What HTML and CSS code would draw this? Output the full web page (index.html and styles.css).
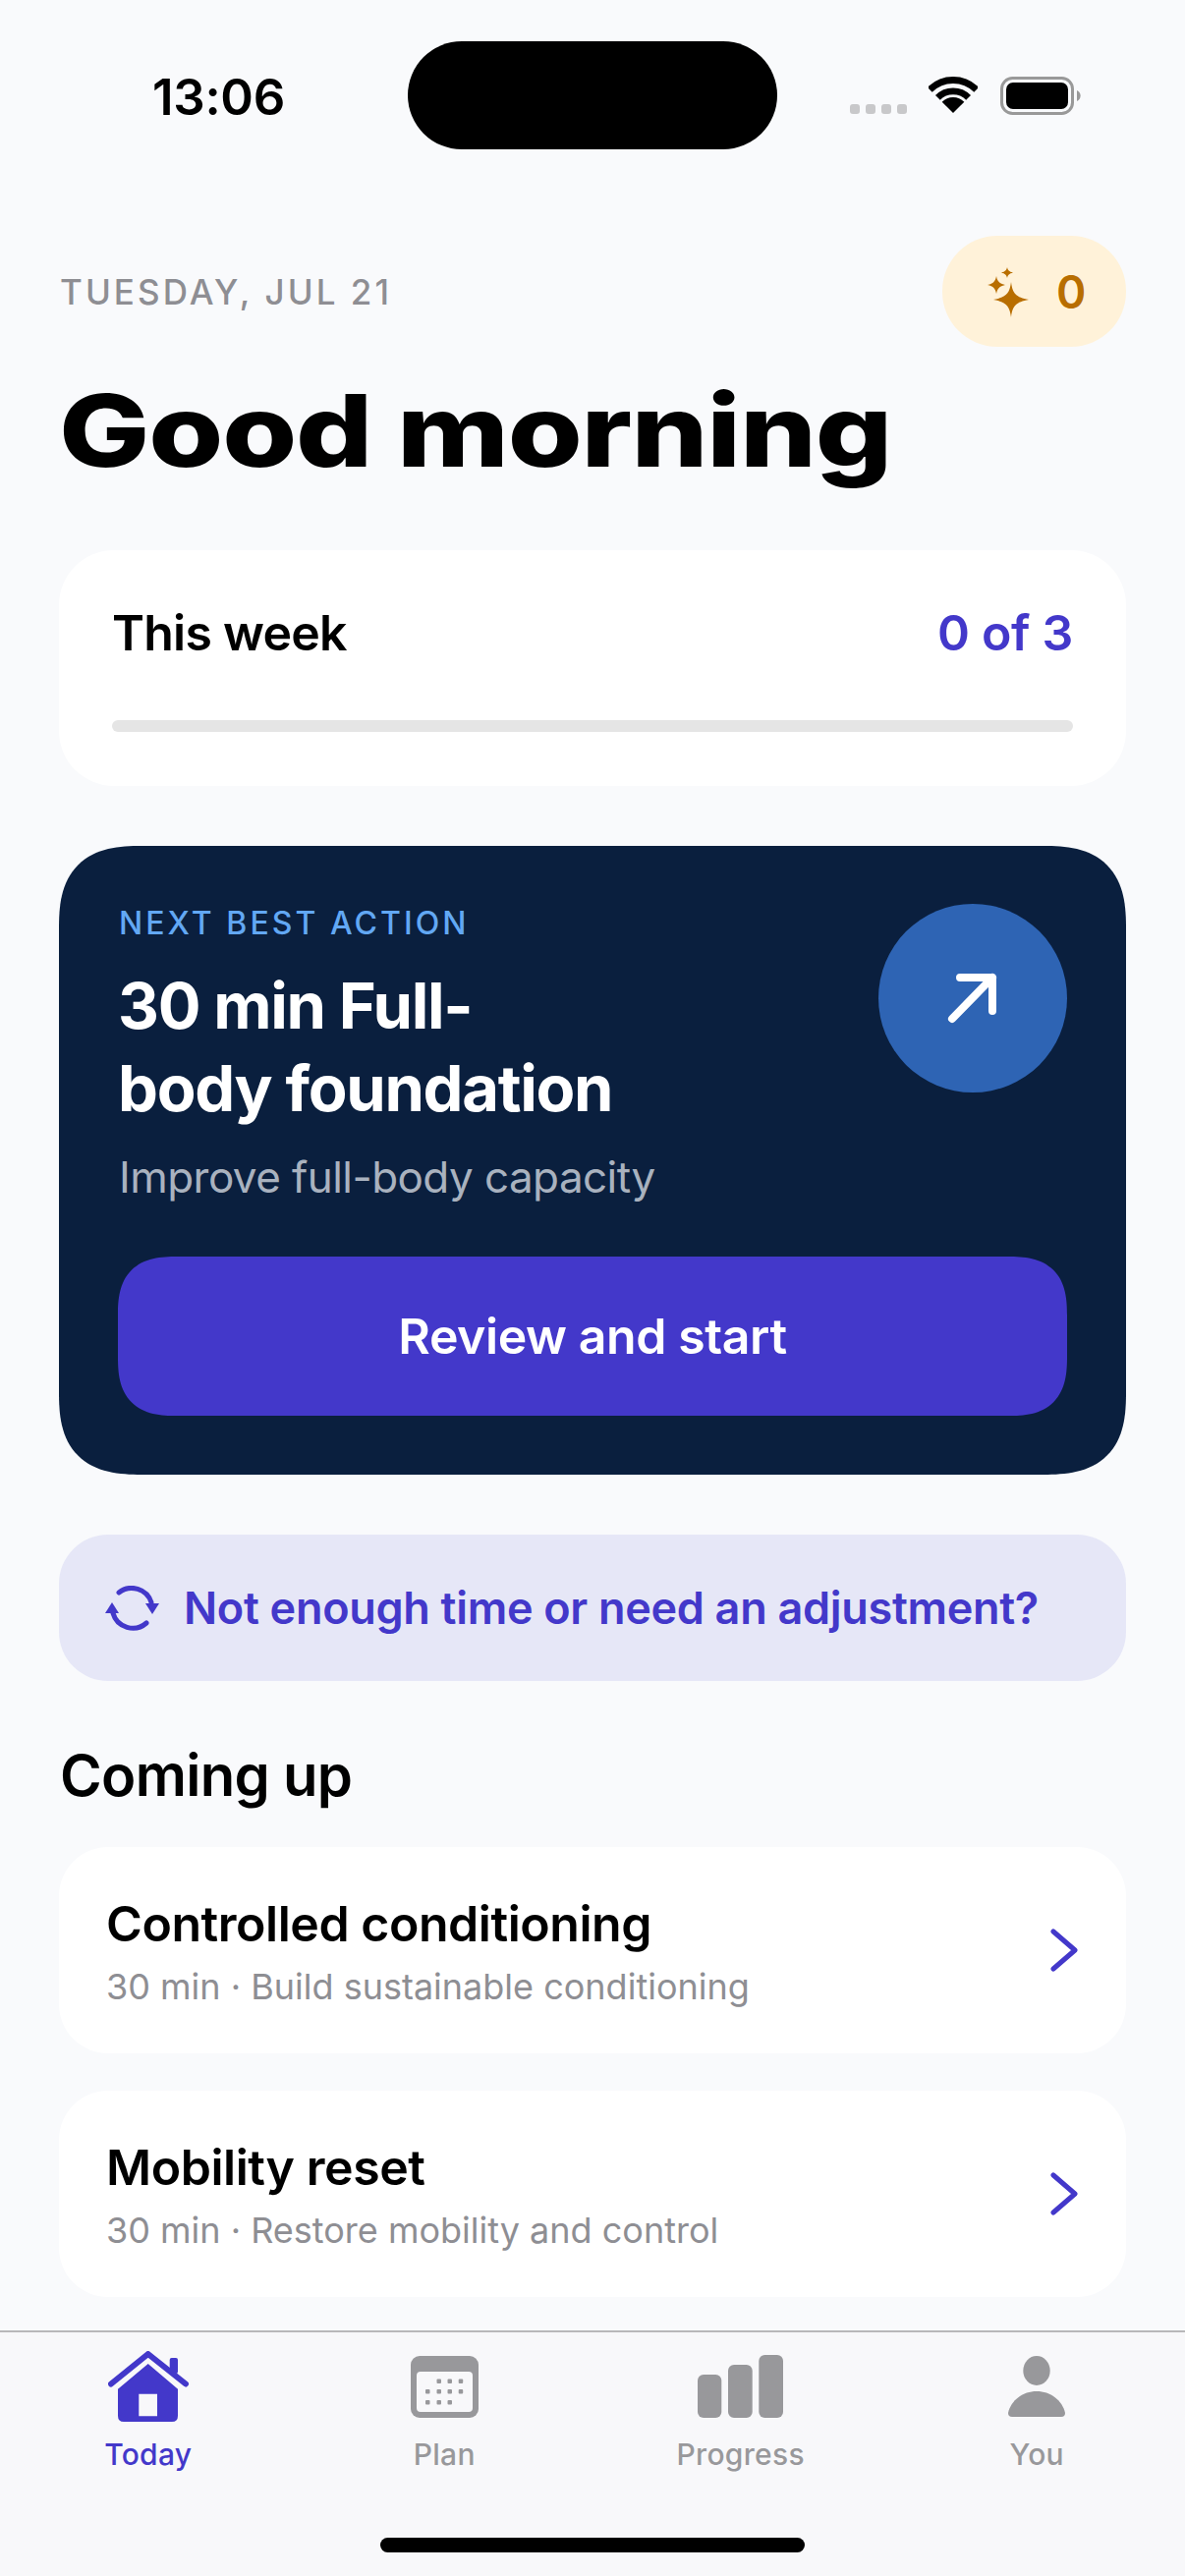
FILE: index.html
```html
<!DOCTYPE html>
<html lang="en">
<head>
<meta charset="utf-8">
<title>Today</title>
<link rel="stylesheet" href="styles.css">
</head>
<body>
<div class="screen">
  <header class="status">
    <span class="time">13:06</span>
    <span class="island"></span>
    <span class="status-icons">
      <span class="signal"><i></i><i></i><i></i><i></i></span>
      <svg class="wifi" viewBox="0 0 50 37"><path class="wifi-arc" d="M1.3 13.3A33.5 33.5 0 0 1 48.7 13.3"/><path class="wifi-arc" d="M9.4 21.4A22 22 0 0 1 40.6 21.4"/><path d="M25 37L13.7 25.7A16 16 0 0 1 36.3 25.7Z"/></svg>
      <svg class="battery" viewBox="0 0 82 39"><rect class="batt-frame" x="1.5" y="1.5" width="72" height="36" rx="11"/><rect x="6" y="6" width="63" height="27" rx="7"/><path class="batt-tip" d="M78 14a6 6 0 0 1 0 11z"/></svg>
    </span>
  </header>

  <main class="content">
    <div class="topline">
      <span class="date">TUESDAY, JUL 21</span>
      <span class="points">
        <svg class="sparkles" viewBox="0 0 44 52"><path d="M24 16C25.500 28 29 31.500 42 34C29 36.500 25.500 40 24 52C22.500 40 19 36.500 6 34C19 31.500 22.500 28 24 16Z"/><path d="M9 10C10 15.500 12 17.500 18 19C12 20.500 10 22.500 9 28C8 22.500 6 20.500 0 19C6 17.500 8 15.500 9 10Z"/><path d="M20 1C20.600 4 22 5.500 26 6.500C22 7.500 20.600 9 20 12C19.400 9 18 7.500 14 6.500C18 5.500 19.400 4 20 1Z"/></svg>
        <b class="points-num">0</b>
      </span>
    </div>
    <h1 class="greeting">Good morning</h1>

    <section class="week">
      <div class="week-row"><span class="week-title">This week</span><span class="week-count">0 of 3</span></div>
      <div class="track"></div>
    </section>

    <section class="hero">
      <div class="hero-top">
        <div class="hero-text">
          <div class="eyebrow">NEXT BEST ACTION</div>
          <h2 class="hero-title">30 min Full-<br>body foundation</h2>
          <p class="hero-sub">Improve full-body capacity</p>
        </div>
        <span class="hero-circle">
          <svg class="arrow" viewBox="0 0 56 56"><path d="M7 49L48 7M15 7H48V41"/></svg>
        </span>
      </div>
      <button class="cta">Review and start</button>
    </section>

    <button class="adjust">
      <svg class="refresh" viewBox="0 0 56 46"><path class="refresh-arc" d="M14 7A21 21 0 0 1 47 17"/><path d="M41 18H55L48 29Z"/><path class="refresh-arc" d="M42 38A21 21 0 0 1 8 28"/><path d="M0 28H14L7 17Z"/></svg>
      <span>Not enough time or need an adjustment?</span>
    </button>

    <h3 class="section-title">Coming up</h3>
    <div class="list">
      <article class="item">
        <div class="item-text">
          <div class="item-title">Controlled conditioning</div>
          <div class="item-sub">30 min · Build sustainable conditioning</div>
        </div>
        <svg class="chevron" viewBox="0 0 30 44"><path d="M4 3L26 22L4 41"/></svg>
      </article>
      <article class="item">
        <div class="item-text">
          <div class="item-title">Mobility reset</div>
          <div class="item-sub">30 min · Restore mobility and control</div>
        </div>
        <svg class="chevron" viewBox="0 0 30 44"><path d="M4 3L26 22L4 41"/></svg>
      </article>
    </div>
  </main>

  <nav class="tabbar">
    <div class="tabs">
      <div class="tab tab-active">
        <span class="tab-icon"><svg class="ic-home" viewBox="0 0 82 72"><path class="roof" d="M3 33.500L40.700 3L79 33.500"/><rect x="62.700" y="7" width="8.300" height="16" rx="2"/><path fill-rule="evenodd" d="M40.700 13L71 38.700V66Q71 72 65 72H16Q10 72 10 66V38.700ZM31.300 43.700V66.300H50V43.700Z"/></svg></span>
        <span class="tab-label">Today</span>
      </div>
      <div class="tab">
        <span class="tab-icon"><svg class="ic-plan" viewBox="0 0 69 63"><rect width="69" height="63" rx="9"/><rect class="cal-page" x="6" y="16" width="57" height="41" rx="4"/><g class="cal-dots"><rect x="26.500" y="23.500" width="4.500" height="4.500" rx="1"/><rect x="37.500" y="23.500" width="4.500" height="4.500" rx="1"/><rect x="48.700" y="23.500" width="4.500" height="4.500" rx="1"/><rect x="15" y="34" width="4.500" height="4.500" rx="1"/><rect x="26.500" y="34" width="4.500" height="4.500" rx="1"/><rect x="37.500" y="34" width="4.500" height="4.500" rx="1"/><rect x="48.700" y="34" width="4.500" height="4.500" rx="1"/><rect x="15" y="45" width="4.500" height="4.500" rx="1"/><rect x="26.500" y="45" width="4.500" height="4.500" rx="1"/><rect x="37.500" y="45" width="4.500" height="4.500" rx="1"/></g></svg></span>
        <span class="tab-label">Plan</span>
      </div>
      <div class="tab">
        <span class="tab-icon"><svg class="ic-progress" viewBox="0 0 87 64"><rect y="20" width="24.300" height="44" rx="6"/><rect x="31" y="10" width="24.700" height="54" rx="6"/><rect x="62.300" width="24.700" height="64" rx="6"/></svg></span>
        <span class="tab-label">Progress</span>
      </div>
      <div class="tab">
        <span class="tab-icon"><svg class="ic-you" viewBox="0 0 58 62"><ellipse cx="29" cy="15" rx="13.700" ry="15"/><path d="M4 62Q0 62 0 58C3 45 15 36 29 36C43 36 55 45 58 58Q58 62 54 62Z"/></svg></span>
        <span class="tab-label">You</span>
      </div>
    </div>
    <div class="home-bar"></div>
  </nav>
</div>
</body>
</html>
```

FILE: styles.css
```css
* { box-sizing: border-box; }
html, body { margin: 0; padding: 0; }
body { background: #f9fafc; font-family: Inter, "Liberation Sans", sans-serif; color: #000; }
.screen { width: 1206px; height: 2622px; overflow: hidden; display: flex; flex-direction: column; background: #f9fafc; }

.status { height: 152px; padding-top: 42px; display: grid; grid-template-columns: 415px 376px 1fr; }
.time { font-size: 51px; font-weight: 600; line-height: 110px; text-align: center; padding-left: 30px; margin-top: 2px; letter-spacing: -0.300px; }
.island { height: 110px; background: #000; border-radius: 55px; }
.status-icons { display: flex; align-items: flex-start; padding: 36px 0 0 74px; }
.signal { display: flex; gap: 6px; margin-top: 28px; }
.signal i { width: 10px; height: 10px; background: #c8c8ca; border-radius: 3px; }
.wifi { width: 50px; height: 37px; margin-left: 22px; }
.wifi-arc { fill: none; stroke: #000; stroke-width: 6.800px; }
.battery { width: 82px; height: 39px; margin-left: 23px; }
.batt-frame { fill: none; stroke: #999; stroke-width: 3px; }
.batt-tip { fill: #999; }

.content { flex: 1; padding: 0 60px; min-height: 0; }
.topline { margin-top: 88px; height: 113px; display: flex; justify-content: space-between; align-items: center; padding-left: 1px; }
.date { font-size: 35px; font-weight: 500; letter-spacing: 3.050px; color: #8e8e93; }
.points { width: 187px; height: 113px; border-radius: 56px; background: #fff2d9; display: flex; align-items: center; padding-left: 46px; gap: 26px; color: #b86e00; }
.sparkles { width: 44px; height: 52px; fill: #b86e00; }
.points-num { font-size: 46px; font-weight: 600; }

.greeting { margin: 25px 0 62px; font-size: 102px; font-weight: 800; line-height: 120px; letter-spacing: -1px; transform: scaleX(1.205); transform-origin: 0 50%; white-space: nowrap; }

.week { height: 240px; background: #fff; border-radius: 56px; padding: 56px 54px 55px; }
.week-row { display: flex; justify-content: space-between; font-size: 50px; line-height: 56px; font-weight: 600; }
.week-title { letter-spacing: -0.750px; }
.week-count { color: #4338ca; letter-spacing: -0.300px; }
.track { margin-top: 61px; height: 12px; border-radius: 6px; background: #e5e5e5; }

.hero { margin-top: 61px; height: 640px; background: #0a1f3e; border-radius: 84px; corner-shape: superellipse(1.4); padding: 59px 60px 60px; }
.hero-top { display: flex; justify-content: space-between; align-items: flex-start; }
.hero-text { width: 700px; }
.eyebrow { font-size: 32px; line-height: 40px; font-weight: 500; letter-spacing: 3.050px; color: #62a8f4; padding-left: 1px; }
.hero-title { margin: 22px 0 0; font-size: 65px; line-height: 84px; font-weight: 700; letter-spacing: -1.300px; color: #fff; }
.hero-sub { margin: 20px 0 0; font-size: 44px; line-height: 56px; letter-spacing: -0.560px; color: #a9b2bf; padding-left: 1px; }
.hero-circle { width: 192px; height: 192px; border-radius: 50%; background: #2e64b4; display: flex; align-items: center; justify-content: center; }
.arrow { width: 56px; height: 56px; fill: none; stroke: #fff; stroke-width: 8px; stroke-linecap: round; stroke-linejoin: round; }
.cta { display: block; width: 100%; margin-top: 53px; height: 162px; border: 0; border-radius: 60px; corner-shape: superellipse(1.4); background: #4338ca; color: #fff; font: 600 50px Inter, sans-serif; letter-spacing: -0.420px; }

.adjust { margin-top: 61px; width: 100%; height: 149px; border: 0; border-radius: 50px; background: #e6e7f7; color: #4338ca; display: flex; align-items: center; gap: 24px; padding: 0 0 0 47px; font: 600 45px Inter, sans-serif; letter-spacing: -0.300px; }
.refresh { width: 56px; height: 46px; fill: #4338ca; flex: none; }
.refresh-arc { fill: none; stroke: #4338ca; stroke-width: 5px; stroke-linecap: round; }

.section-title { margin: 61px 0 0 1px; font-size: 58px; line-height: 70px; font-weight: 600; letter-spacing: -0.700px; }
.list { margin-top: 38px; display: flex; flex-direction: column; gap: 38px; }
.item { height: 210px; background: #fff; border-radius: 50px; padding: 47px 48px 0 48px; display: flex; justify-content: space-between; }
.item-title { font-size: 50px; line-height: 62px; font-weight: 600; letter-spacing: -0.450px; }
.item-sub { margin-top: 10px; font-size: 36px; line-height: 46px; color: #8e8e93; }
.chevron { width: 30px; height: 44px; margin-top: 36px; fill: none; stroke: #4338ca; stroke-width: 5px; stroke-linecap: round; stroke-linejoin: round; }

.tabbar { height: 250px; flex: none; background: #f8f8fa; border-top: 2px solid #b8b8ba; padding-top: 19px; }
.tabs { display: grid; grid-template-columns: repeat(4, 1fr); }
.tab { display: flex; flex-direction: column; align-items: center; color: #98989b; }
.tab-active { color: #4338ca; }
.tab-icon { height: 72px; display: flex; align-items: center; justify-content: center; }
.tab-label { margin-top: 13px; font-size: 30px; line-height: 40px; font-weight: 500; letter-spacing: 0.300px; }
.ic-home { width: 82px; height: 72px; fill: #4338ca; }
.roof { fill: none; stroke: #4338ca; stroke-width: 6px; stroke-linecap: round; stroke-linejoin: round; }
.ic-plan { width: 69px; height: 63px; fill: #98989b; }
.cal-page { fill: #f8f8fa; }
.ic-progress { width: 87px; height: 64px; fill: #98989b; }
.ic-you { width: 58px; height: 62px; fill: #98989b; }
.home-bar { width: 432px; height: 15px; margin: 65px auto 0; border-radius: 8px; background: #000; }
```
